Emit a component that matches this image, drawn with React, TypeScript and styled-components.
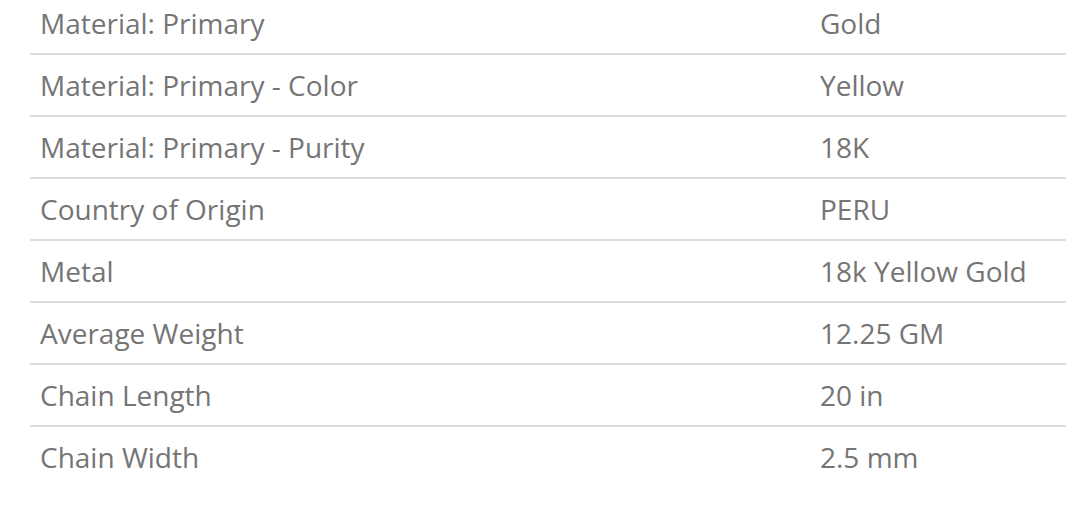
import React from "react";
import styled, { createGlobalStyle } from "styled-components";

const GlobalStyle = createGlobalStyle`
  html, body {
    margin: 0;
    padding: 0;
    background: #ffffff;
    overflow: hidden;
  }
`;

const Page = styled.div`
  padding: 0 0 0 30px;
  margin-top: -7px;
  font-family: "Open Sans", "Liberation Sans", sans-serif;
`;

const Table = styled.table`
  width: 1036px;
  border-collapse: collapse;
`;

const Row = styled.tr<{ $last?: boolean }>`
  border-bottom: ${p => (p.$last ? "none" : "2px solid #dcdcdc")};
`;

const Cell = styled.td<{ $w?: string }>`
  height: 60px;
  padding: 0 0 0 10px;
  width: ${p => p.$w || "auto"};
  font-size: 28px;
  color: #757575;
  vertical-align: middle;
  white-space: nowrap;
`;

const specs: [string, string][] = [
  ["Material: Primary", "Gold"],
  ["Material: Primary - Color", "Yellow"],
  ["Material: Primary - Purity", "18K"],
  ["Country of Origin", "PERU"],
  ["Metal", "18k Yellow Gold"],
  ["Average Weight", "12.25 GM"],
  ["Chain Length", "20 in"],
  ["Chain Width", "2.5 mm"],
];

export default function App() {
  return (
    <>
      <GlobalStyle />
      <Page>
        <Table>
          <tbody>
            {specs.map(([label, value], i) => (
              <Row key={label} $last={i === specs.length - 1}>
                <Cell $w="770px">{label}</Cell>
                <Cell>{value}</Cell>
              </Row>
            ))}
          </tbody>
        </Table>
      </Page>
    </>
  );
}
